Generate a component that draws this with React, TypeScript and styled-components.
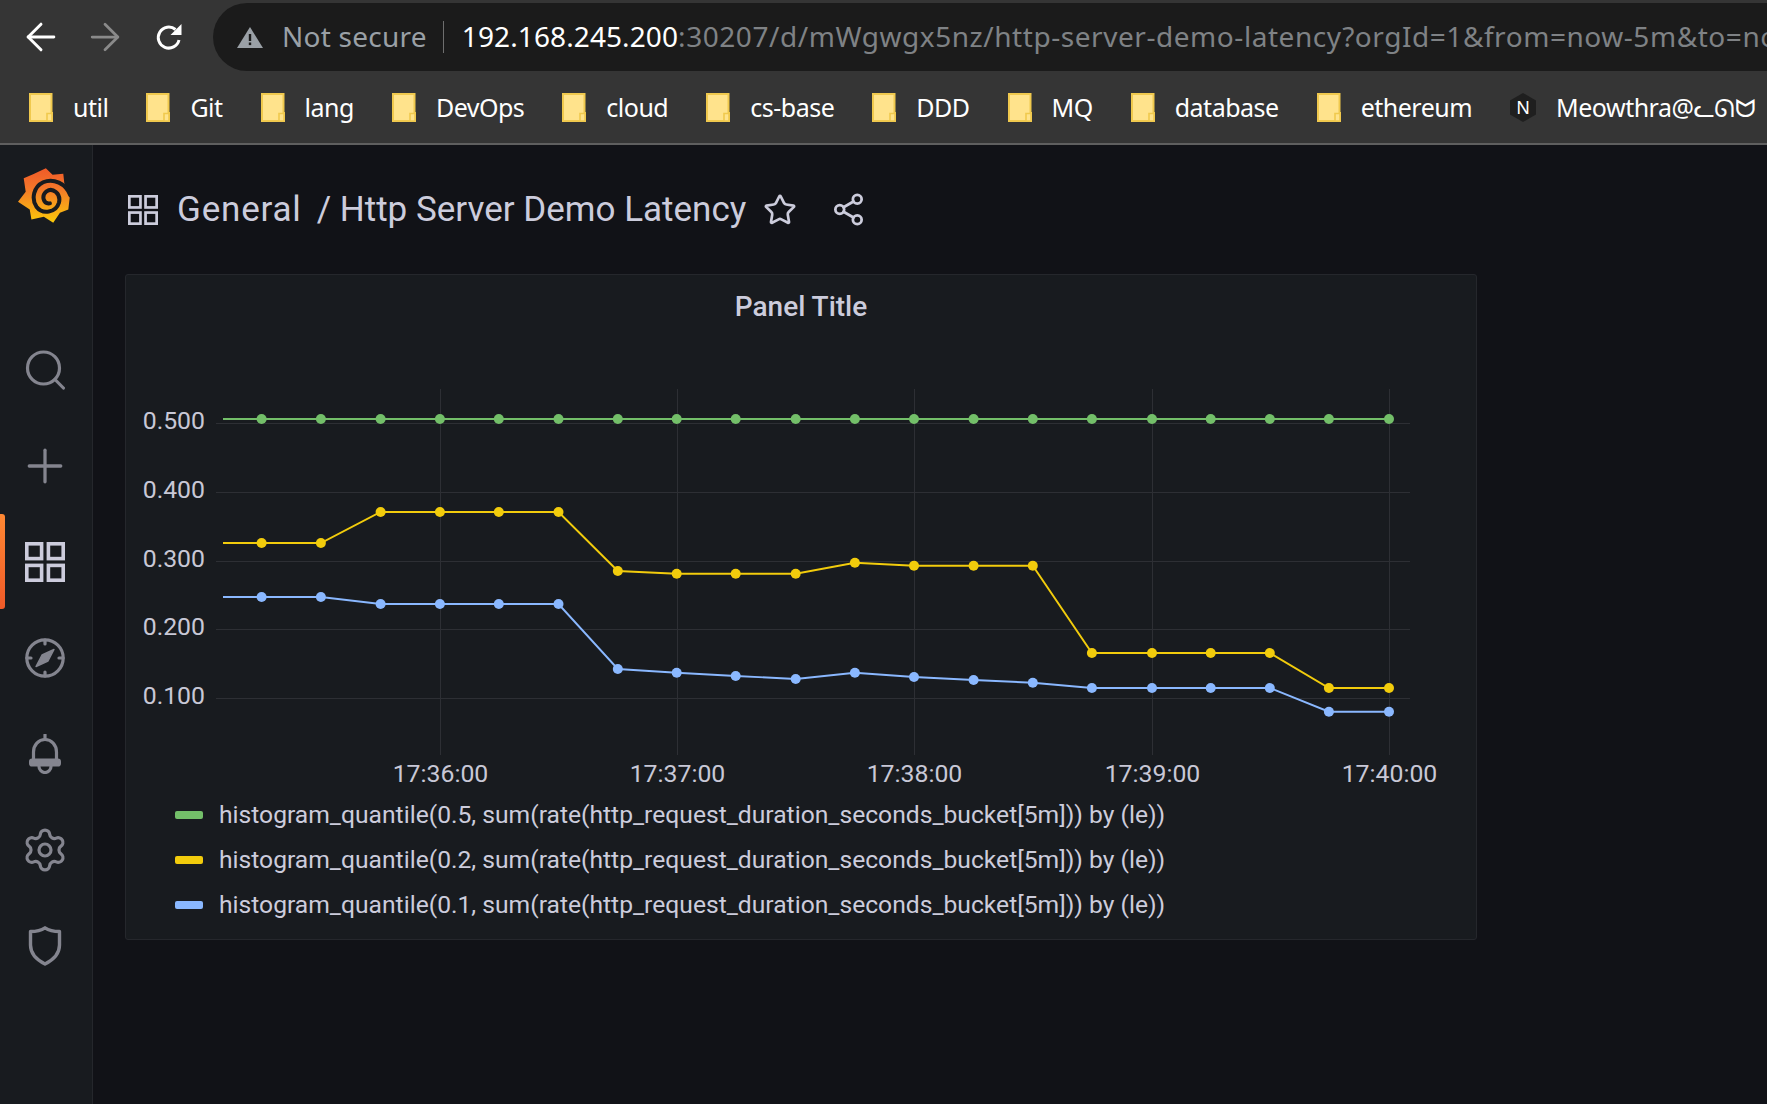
import React from "react";
import styled, { createGlobalStyle } from "styled-components";
import { ArrowLeft, ArrowRight, Plus, Settings, Share2, Star } from "lucide-react";

const GlobalStyle = createGlobalStyle`
    html, body {
        margin: 0;
        padding: 0;
        height: 100%;
        background: #111217;
        overflow: hidden;
    }
    * {
        box-sizing: border-box;
    }
`;

const BOOKMARKS = ["util", "Git", "lang", "DevOps", "cloud", "cs-base", "DDD", "MQ", "database", "ethereum"];

const STEP_X = [
    261.6, 320.9, 380.6, 439.9, 498.8, 558.5, 617.8, 676.7, 735.7, 795.7, 854.9, 914, 973.6, 1032.8, 1091.9, 1152,
    1210.7, 1269.8, 1328.9, 1389,
];

const SERIES = [
    {
        color: "#73bf69",
        label: "histogram_quantile(0.5, sum(rate(http_request_duration_seconds_bucket[5m])) by (le))",
        ys: [419, 419, 419, 419, 419, 419, 419, 419, 419, 419, 419, 419, 419, 419, 419, 419, 419, 419, 419, 419],
    },
    {
        color: "#f2cc0c",
        label: "histogram_quantile(0.2, sum(rate(http_request_duration_seconds_bucket[5m])) by (le))",
        ys: [543, 543, 512, 512, 512, 512, 571, 573.7, 573.7, 573.7, 562.7, 565.7, 565.7, 565.7, 653, 653, 653, 653, 688, 688],
    },
    {
        color: "#8ab8ff",
        label: "histogram_quantile(0.1, sum(rate(http_request_duration_seconds_bucket[5m])) by (le))",
        ys: [597, 597, 604, 604, 604, 604, 669, 672.7, 676, 679, 672.7, 677, 680, 682.7, 688, 688, 688, 688, 711.7, 711.7],
    },
];

const GRID_Y = [
    { y: 423.5, label: "0.500" },
    { y: 492.5, label: "0.400" },
    { y: 561.5, label: "0.300" },
    { y: 629.5, label: "0.200" },
    { y: 698.5, label: "0.100" },
];

const GRID_X = [
    { x: 440.5, label: "17:36:00" },
    { x: 677.5, label: "17:37:00" },
    { x: 914.5, label: "17:38:00" },
    { x: 1152.5, label: "17:39:00" },
    { x: 1389.5, label: "17:40:00" },
];

const FolderIcon = () => (
    <svg width="24" height="29" viewBox="0 0 24 29">
        <path d="M1 1H22.5V20H23V28H1Z" fill="#ffe38c" stroke="#f0c94e" strokeWidth="2" />
        <path d="M18 20.5H23V28H18Z" fill="#ffe38c" stroke="#f0c94e" strokeWidth="1.6" />
    </svg>
);

const NginxIcon = () => (
    <svg width="26" height="29" viewBox="0 0 26 29">
        <polygon points="13,0 26,7.5 26,21.5 13,29 0,21.5 0,7.5" fill="#1f1f1f" />
        <text x="13" y="21" fontFamily="Noto Sans, sans-serif" fontSize="18" fill="#ffffff" textAnchor="middle">
            N
        </text>
    </svg>
);

const ReloadIcon = () => (
    <svg width="28" height="28" viewBox="0 0 28 28" fill="none">
        <path d="M24 17A10.5 10.5 0 1 1 20.5 6.5" stroke="#ffffff" strokeWidth="3" />
        <path d="M26.5 1V12H15.5Z" fill="#ffffff" />
    </svg>
);

const WarningSvg = styled.svg`
    flex-shrink: 0;
`;

const WarningIcon = () => (
    <WarningSvg width="26" height="21" viewBox="0 0 26 21">
        <path d="M13 0L26 21H0Z" fill="#9aa0a6" />
        <rect x="11.8" y="7" width="2.4" height="7" fill="#1b1b1b" />
        <rect x="11.8" y="15.5" width="2.4" height="2.6" fill="#1b1b1b" />
    </WarningSvg>
);

const GrafanaLogo = () => (
    <svg width="52" height="55" viewBox="55 55 155 163">
        <defs>
            <linearGradient id="grafanaFill" x1="0" y1="0" x2="0" y2="1">
                <stop offset="0" stopColor="#f05a28" />
                <stop offset="0.35" stopColor="#f4752a" />
                <stop offset="1" stopColor="#fbca0a" />
            </linearGradient>
        </defs>
        <path
            d="M138 55L158 75L190 72L193 100L210 135L205 178L180 188L160 218L132 200L95 208L90 178L55 155L78 125L72 85L100 73Z"
            fill="url(#grafanaFill)"
        />
        <path
            d="M211 136C198 100 160 84 130 97C102 110 94 146 110 170C128 194 168 188 177 158C184 130 158 112 140 124C124 137 130 163 150 160"
            fill="none"
            stroke="#181b1f"
            strokeWidth="12"
            strokeLinecap="round"
        />
    </svg>
);

const AppsIcon = ({ size }: { size: number }) => (
    <svg width={size} height={size} viewBox="0 0 40 40" fill="none" stroke="currentColor" strokeWidth="3.6">
        <rect x="1.8" y="1.8" width="14.8" height="14.8" />
        <rect x="23.4" y="1.8" width="14.8" height="14.8" />
        <rect x="1.8" y="23.4" width="14.8" height="14.8" />
        <rect x="23.4" y="23.4" width="14.8" height="14.8" />
    </svg>
);

const SearchGlyph = () => (
    <svg width="40" height="40" viewBox="0 0 40 40" fill="none" stroke="currentColor" strokeWidth="3.2" strokeLinecap="round">
        <circle cx="18.5" cy="18" r="16" />
        <line x1="30" y1="29.5" x2="38.4" y2="38" />
    </svg>
);

const CompassGlyph = () => (
    <svg width="40" height="40" viewBox="0 0 40 40" fill="none" stroke="currentColor" strokeWidth="3.2" strokeLinecap="round">
        <circle cx="20" cy="20" r="18.2" />
        <line x1="20" y1="2" x2="20" y2="6" />
        <line x1="20" y1="34" x2="20" y2="38" />
        <line x1="2" y1="20" x2="6" y2="20" />
        <line x1="34" y1="20" x2="38" y2="20" />
        <path d="M11 28.5L17 17L29 11.5L23 23Z" fill="currentColor" strokeWidth="1.4" strokeLinejoin="round" />
    </svg>
);

const BellGlyph = () => (
    <svg width="40" height="40" viewBox="0 0 40 40" fill="none" stroke="currentColor" strokeWidth="3.2" strokeLinecap="round">
        <line x1="20" y1="0.8" x2="20" y2="4" />
        <path d="M8.5 26V18a11.5 12.5 0 0 1 23 0V26" />
        <rect x="5.6" y="26" width="28.8" height="5" rx="1.5" fill="currentColor" />
        <path d="M14 32.5a6 6 0 0 0 12 0" />
    </svg>
);

const ShieldGlyph = () => (
    <svg width="40" height="40" viewBox="0 0 40 40" fill="none" stroke="currentColor" strokeWidth="3.4" strokeLinejoin="round">
        <path d="M5.5 5.5C11 5.5 16 4.5 20 1.8C24 4.5 29 5.5 34.5 5.5V19C34.5 28 28 34 20 38C12 34 5.5 28 5.5 19Z" />
    </svg>
);

const App = () => {
    return (
        <Page>
            <GlobalStyle />
            <BrowserBar>
                <NavIcons>
                    <NavButton $color="#ffffff">
                        <ArrowLeft size={44} strokeWidth={1.6} />
                    </NavButton>
                    <NavButton $color="#8a8a8a">
                        <ArrowRight size={44} strokeWidth={1.5} />
                    </NavButton>
                    <NavButton $color="#ffffff">
                        <ReloadIcon />
                    </NavButton>
                </NavIcons>
                <Omnibox>
                    <WarningIcon />
                    <NotSecure>Not secure</NotSecure>
                    <OmniDivider />
                    <UrlText>
                        <UrlHost>192.168.245.200</UrlHost>
                        :30207/d/mWgwgx5nz/http-server-demo-latency?orgId=1&amp;from=now-5m&amp;to=now
                    </UrlText>
                </Omnibox>
            </BrowserBar>
            <BookmarkBar>
                {BOOKMARKS.map((name) => (
                    <Bookmark key={name}>
                        <FolderIcon />
                        <BookmarkLabel>{name}</BookmarkLabel>
                    </Bookmark>
                ))}
                <Bookmark>
                    <NginxIcon />
                    <BookmarkLabel>
                        Meowthra@<CatText>ᓚᘏᗢ</CatText>
                    </BookmarkLabel>
                </Bookmark>
            </BookmarkBar>
            <Body>
                <Sidebar>
                    <LogoBox>
                        <GrafanaLogo />
                    </LogoBox>
                    <SideItem>
                        <SearchGlyph />
                    </SideItem>
                    <SideItem>
                        <Plus size={54} strokeWidth={1.45} />
                    </SideItem>
                    <SideItem $active>
                        <AppsIcon size={40} />
                    </SideItem>
                    <SideItem>
                        <CompassGlyph />
                    </SideItem>
                    <SideItem>
                        <BellGlyph />
                    </SideItem>
                    <SideItem>
                        <Settings size={48} strokeWidth={1.6} />
                    </SideItem>
                    <SideItem>
                        <ShieldGlyph />
                    </SideItem>
                </Sidebar>
                <Main>
                    <TitleRow>
                        <AppsIcon size={30} />
                        <TitleText>
                            <TitleFolder>General</TitleFolder>/ Http Server Demo Latency
                        </TitleText>
                        <StarWrap>
                            <Star size={34} strokeWidth={1.9} />
                        </StarWrap>
                        <ShareWrap>
                            <Share2 size={35} strokeWidth={1.9} />
                        </ShareWrap>
                    </TitleRow>
                    <Panel>
                        <PanelTitle>Panel Title</PanelTitle>
                        <ChartSvg viewBox="126 339 1350 451" width="1350" height="451">
                            {GRID_Y.map((g) => (
                                <g key={g.label}>
                                    <line x1="216" x2="1410" y1={g.y} y2={g.y} stroke="#2d2f34" />
                                    <text x="205" y={g.y + 5} textAnchor="end" fill="#c8c8d6" fontSize="24.8">
                                        {g.label}
                                    </text>
                                </g>
                            ))}
                            {GRID_X.map((g) => (
                                <g key={g.label}>
                                    <line x1={g.x} x2={g.x} y1="389" y2="755" stroke="#2d2f34" />
                                    <text x={g.x} y="782" textAnchor="middle" fill="#c8c8d6" fontSize="24.8">
                                        {g.label}
                                    </text>
                                </g>
                            ))}
                            {SERIES.map((s) => (
                                <g key={s.color}>
                                    <polyline
                                        fill="none"
                                        stroke={s.color}
                                        strokeWidth="1.9"
                                        points={`223,${s.ys[0]} ${STEP_X.map((x, i) => `${x},${s.ys[i]}`).join(" ")}`}
                                    />
                                    {STEP_X.map((x, i) => (
                                        <circle key={x} cx={x} cy={s.ys[i]} r="5" fill={s.color} />
                                    ))}
                                </g>
                            ))}
                        </ChartSvg>
                        <Legend>
                            {SERIES.map((s) => (
                                <LegendRow key={s.color}>
                                    <LegendSwatch $color={s.color} />
                                    <LegendLabel>{s.label}</LegendLabel>
                                </LegendRow>
                            ))}
                        </Legend>
                    </Panel>
                </Main>
            </Body>
        </Page>
    );
};

export default App;

const Page = styled.div`
    display: flex;
    flex-direction: column;
    width: 1767px;
    height: 1104px;
    overflow: hidden;
    background: #111217;
`;

const BrowserBar = styled.div`
    display: flex;
    align-items: stretch;
    height: 71px;
    padding-top: 3px;
    background: #353535;
`;

const NavIcons = styled.div`
    display: flex;
    align-items: center;
    width: 213px;
    padding-left: 9px;
    flex-shrink: 0;
`;

const NavButton = styled.div<{ $color: string }>`
    display: flex;
    align-items: center;
    justify-content: center;
    width: 64px;
    color: ${(p) => p.$color};
`;

const Omnibox = styled.div`
    display: flex;
    align-items: center;
    flex: 1;
    min-width: 0;
    padding-left: 24px;
    overflow: hidden;
    background: #1b1b1b;
    border-radius: 34px 0 0 34px;
    font-family: "Noto Sans", sans-serif;
    font-size: 28px;
`;

const NotSecure = styled.span`
    margin: 0 0 2px 19px;
    color: #9aa0a6;
    white-space: nowrap;
    letter-spacing: 0.25px;
    flex-shrink: 0;
`;

const OmniDivider = styled.span`
    width: 1px;
    height: 32px;
    margin: 0 18px 0 16px;
    background: #6e6e6e;
    flex-shrink: 0;
`;

const UrlText = styled.span`
    margin-bottom: 2px;
    color: #7f8285;
    white-space: nowrap;
    letter-spacing: 0.55px;
    flex-shrink: 0;
`;

const UrlHost = styled.span`
    color: #ffffff;
    letter-spacing: 0.1px;
`;

const BookmarkBar = styled.div`
    display: flex;
    align-items: center;
    gap: 38px;
    height: 74px;
    padding: 0 0 0 29px;
    background: #353535;
    border-bottom: 2px solid #5f5f5f;
    overflow: hidden;
`;

const Bookmark = styled.div`
    display: flex;
    align-items: center;
    gap: 20px;
    flex-shrink: 0;
`;

const BookmarkLabel = styled.span`
    color: #ffffff;
    font-family: "Noto Sans", sans-serif;
    font-size: 25px;
    letter-spacing: -0.5px;
    white-space: nowrap;
`;

const CatText = styled.span`
    font-family: "DejaVu Sans", sans-serif;
`;

const Body = styled.div`
    display: flex;
    flex: 1;
    min-height: 0;
    font-family: Roboto, sans-serif;
`;

const Sidebar = styled.nav`
    display: flex;
    flex-direction: column;
    align-items: stretch;
    width: 93px;
    flex-shrink: 0;
    background: #181b1f;
    border-right: 1px solid #25272c;
`;

const LogoBox = styled.div`
    display: flex;
    justify-content: center;
    height: 177px;
    padding-top: 23px;
    padding-right: 4px;
`;

const SideItem = styled.div<{ $active?: boolean }>`
    position: relative;
    display: flex;
    align-items: center;
    justify-content: center;
    height: 96px;
    padding-right: 2px;
    color: ${(p) => (p.$active ? "#ccccdc" : "#84858f")};

    ${(p) =>
        p.$active &&
        `&::before {
            content: "";
            position: absolute;
            left: 0;
            top: 0;
            width: 5px;
            height: 95px;
            border-radius: 0 3px 3px 0;
            background: linear-gradient(180deg, #ff8833, #f05a28);
        }`}
`;

const Main = styled.main`
    display: flex;
    flex-direction: column;
    flex: 1;
    min-width: 0;
    padding-left: 32px;
`;

const TitleRow = styled.div`
    display: flex;
    align-items: center;
    height: 129px;
    padding-left: 3px;
    color: #ccccdc;
`;

const TitleText = styled.h1`
    margin: 0 0 0 19px;
    font-size: 35px;
    font-weight: 400;
    white-space: nowrap;
`;

const TitleFolder = styled.span`
    margin-right: 15px;
    letter-spacing: 0.8px;
`;

const StarWrap = styled.div`
    display: flex;
    margin-left: 17px;
`;

const ShareWrap = styled.div`
    display: flex;
    margin-left: 34px;
`;

const Panel = styled.section`
    display: flex;
    flex-direction: column;
    width: 1352px;
    height: 666px;
    background: #181b1f;
    border: 1px solid #25272c;
    border-radius: 3px;
`;

const PanelTitle = styled.div`
    display: flex;
    align-items: center;
    justify-content: center;
    height: 64px;
    padding-bottom: 2px;
    flex-shrink: 0;
    color: #ccccdc;
    font-size: 28px;
    font-weight: 500;
`;

const ChartSvg = styled.svg`
    display: block;
    flex-shrink: 0;
    font-family: Roboto, sans-serif;
`;

const Legend = styled.div`
    display: flex;
    flex-direction: column;
    padding: 2px 0 0 49px;
`;

const LegendRow = styled.div`
    display: flex;
    align-items: center;
    gap: 16px;
    height: 45px;
`;

const LegendSwatch = styled.span<{ $color: string }>`
    width: 28px;
    height: 8px;
    border-radius: 2px;
    background: ${(p) => p.$color};
    flex-shrink: 0;
`;

const LegendLabel = styled.span`
    color: #ccccdc;
    font-size: 24.65px;
    white-space: nowrap;
`;
